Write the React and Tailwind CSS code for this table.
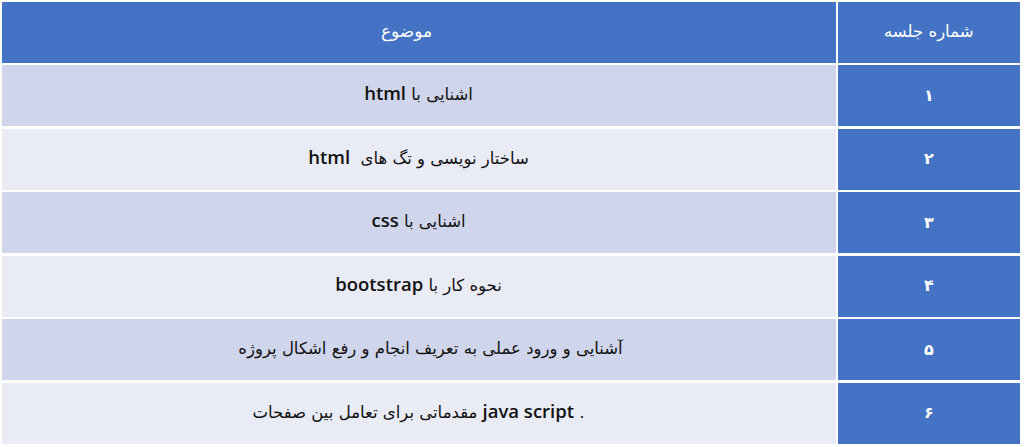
import React from 'react';

// each topic: [arabic part before latin, latin, arabic part after] in logical (rtl) order
const rows = [
    { num: '۱', parts: ['اشنایی با ', 'html', ''] },
    { num: '۲', parts: ['ساختار نویسی و تگ های \u00a0', 'html', ''] },
    { num: '۳', parts: ['اشنایی با ', 'css', ''] },
    { num: '۴', parts: ['نحوه کار با ', 'bootstrap', ''] },
    { num: '۵', parts: ['آشنایی و ورود عملی به تعریف انجام و رفع اشکال پروژه', '', ''], shift: 'pl-[24px]' },
    { num: '۶', parts: ['. ', 'java script', ' مقدماتی برای تعامل بین صفحات'] },
];

const App = () => {
    return (
        <div className="bg-white w-[1024px] h-[447px] pt-[1.5px] pl-[1.5px] font-['DejaVu_Sans',sans-serif]">
            <div className="grid grid-cols-[834px_182.5px] gap-x-[2px] gap-y-[2.5px] auto-rows-[61px]">
                <div className="bg-[#4472c4] flex items-center justify-center pr-[24px] text-white text-[17px]" dir="rtl">موضوع</div>
                <div className="bg-[#4472c4] flex items-center justify-center text-white text-[16.5px]" dir="rtl">شماره جلسه</div>

                {rows.map((row, i) => (
                    <React.Fragment key={row.num}>
                        <div
                            className={`${i % 2 === 0 ? 'bg-[#cfd5ea]' : 'bg-[#e9ebf5]'} flex items-center justify-center text-[#111] text-[16.5px] ${row.shift || ''}`}
                            dir="rtl"
                        >
                            <span className="whitespace-pre">
                                {row.parts[0]}
                                {row.parts[1] && (
                                    <span className="font-['Open_Sans',sans-serif] font-semibold text-[18.5px] leading-none">{row.parts[1]}</span>
                                )}
                                {row.parts[2]}
                            </span>
                        </div>
                        <div className="bg-[#4472c4] flex items-center justify-center text-white text-[16px] font-bold" dir="rtl">
                            {row.num}
                        </div>
                    </React.Fragment>
                ))}
            </div>
        </div>
    );
};

export default App;
